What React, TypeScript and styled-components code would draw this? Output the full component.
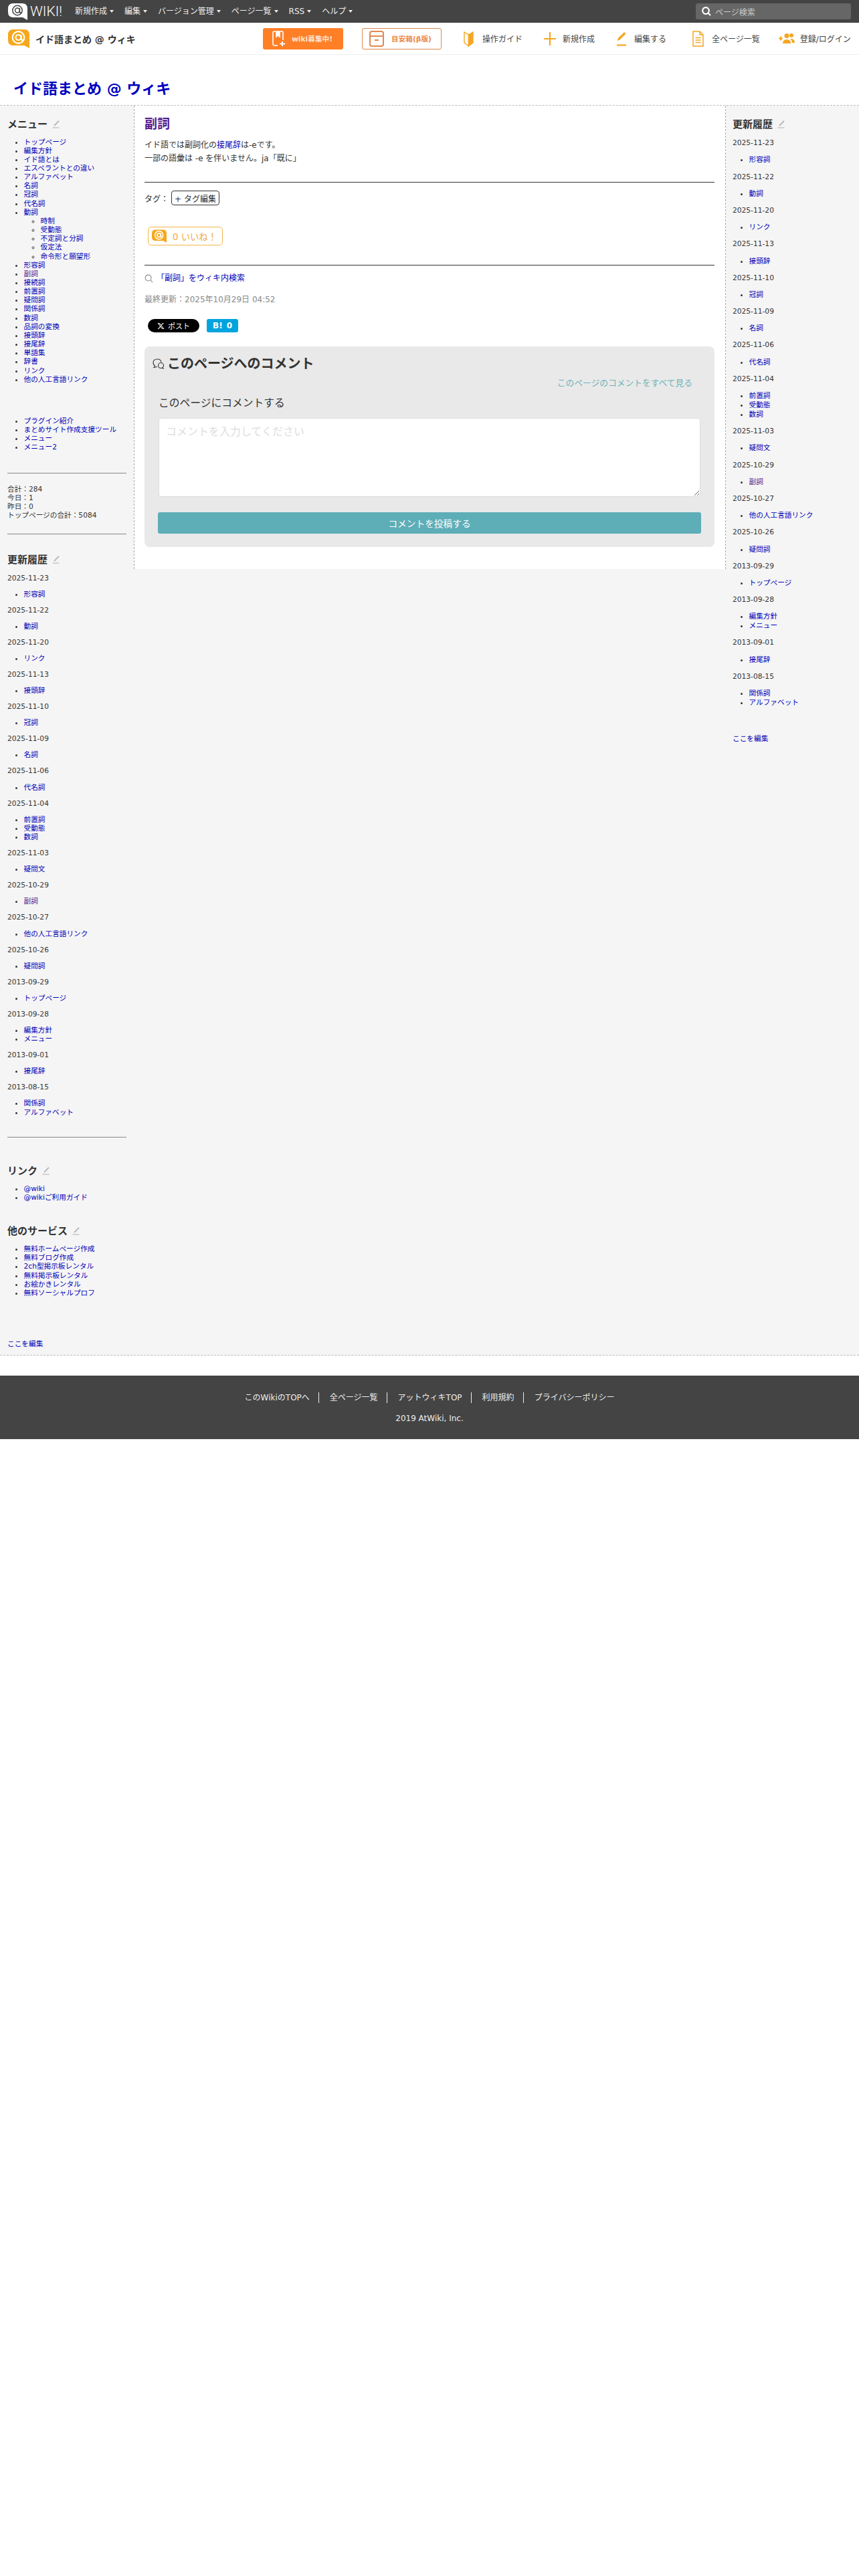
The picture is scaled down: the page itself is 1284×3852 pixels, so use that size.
import React from "react";
import styled, { createGlobalStyle } from "styled-components";

const Global = createGlobalStyle`
  html, body { margin: 0; padding: 0; background: #fff; }
  body { font-family: "DejaVu Sans", "Noto Sans CJK JP", sans-serif; color: #333; }
  * { box-sizing: border-box; }
  a { text-decoration: none; }
`;

const TopBar = styled.div`
  height: 34px; background: #444; display: flex; align-items: center; padding: 0 12px;
`;
const Logo = styled.div`display: flex; align-items: center; width: 100px; flex: none;`;
const LogoWord = styled.span`
  font-family: Roboto, "Liberation Sans", sans-serif; font-weight: 300; font-size: 21px; color: #fff; margin-left: 4px;
`;
const TopNav = styled.nav`display: flex; gap: 16px; flex: 1;`;
const TopItem = styled.a`
  font-size: 12px; color: #eee; display: flex; align-items: center; gap: 4px; line-height: 16px;
  &::after { content: ""; border-left: 3px solid transparent; border-right: 3px solid transparent; border-top: 4px solid #eee; }
`;
const Search = styled.div`
  width: 232px; height: 24px; background: #666; border-radius: 3px; display: flex; align-items: center;
  padding-left: 9px; gap: 6px; font-size: 12px; color: #ccc;
`;

const SubBar = styled.div`
  height: 48px; display: flex; align-items: center; border-bottom: 1px solid #eee;
`;
const Brand = styled.div`
  width: 393px; flex: none; padding-left: 12px; display: flex; align-items: center; gap: 9px;
  font-size: 14px; font-weight: bold; color: #333;
`;
const RecruitButton = styled.a`
  width: 120px; height: 32px; background: #ff7f27; border-radius: 3px; display: flex; align-items: center;
  padding-left: 14px; gap: 9px; font-size: 10.67px; font-weight: bold; color: #fde6d2;
`;
const BoxButton = styled.a`
  width: 119px; height: 32px; margin-left: 28px; border: 1px solid #d98a52; border-radius: 3px; display: flex; align-items: center;
  padding-left: 10px; gap: 11px; font-size: 10.67px; font-weight: bold; color: #ea8a4a; white-space: nowrap;
`;
const ToolItem = styled.a<{ $ml: number; $gap: number }>`
  margin-left: ${(p) => p.$ml}px; display: flex; align-items: center; gap: ${(p) => p.$gap}px; font-size: 12px; color: #444;
  white-space: nowrap;
`;

const TitleBand = styled.div`
  height: 76px; border-bottom: 1px dashed #bbb; padding: 38px 0 0 20px;
`;
const SiteTitle = styled.a`
  font-family: "DejaVu Sans", "Noto Sans CJK JP", sans-serif; font-size: 22px; line-height: 26px; font-weight: bold; color: #0000c0; display: block;
`;

const Columns = styled.div`
  display: grid; grid-template-columns: 200px 885px 199px; align-items: start; background: #f5f5f5;
  border-bottom: 1px dashed #bbb;
`;
const LeftColumn = styled.aside`padding: 18px 10px 10px 11px; font-size: 10.67px; line-height: 13.15px;`;
const RightColumn = styled.aside`padding: 18px 10px 0 10px; font-size: 10.67px; line-height: 14px; color: #333;`;
const Main = styled.main`
  background: #fff; border-left: 1px dashed #aaa; border-right: 1px dashed #aaa; padding: 15px 16px 33px 15px; font-size: 12px; color: #333;
`;

const SideHeading = styled.h3<{ $mt?: number }>`
  margin: ${(p) => p.$mt ?? 0}px 0 0 0; font-size: 15px; line-height: 20px; font-weight: bold; color: #333; display: flex; align-items: center; gap: 7px;
`;
const SideList = styled.ul<{ $mt?: number; $mb?: number }>`
  margin: ${(p) => p.$mt ?? 0}px 0 ${(p) => p.$mb ?? 0}px 0; padding: 0 0 0 24.5px; list-style: disc;
  & ul { margin: 0; padding: 0 0 0 25px; list-style: circle; }
`;
const SideLink = styled.a<{ $visited?: boolean }>`color: ${(p) => (p.$visited ? "#551a8b" : "#0000b8")};`;
const SideRule = styled.hr<{ $mt: number }>`
  margin: ${(p) => p.$mt}px 0 0 0; border: 0; border-top: 1px solid #888; width: 178px;
`;
const Counter = styled.div`margin-top: 17.5px; color: #333;`;
const DateLine = styled.p<{ $gap: number }>`margin: ${(p) => p.$gap}px 0; color: #333;`;
const EditLink = styled.a<{ $mt: number }>`display: block; margin-top: ${(p) => p.$mt}px; color: #0000b8;`;

const PageTitle = styled.h2`margin: 0; font-size: 19px; line-height: 24px; font-weight: bold; color: #551a8b;`;
const Para = styled.p`margin: 10px 0 0; line-height: 20px;`;
const MainRule = styled.hr<{ $mt: number }>`margin: ${(p) => p.$mt}px 0 0; border: 0; border-top: 1px solid #333;`;
const InlineLink = styled.a`color: #0000b8;`;
const TagRow = styled.div`margin-top: 12px; display: flex; align-items: center; gap: 4px; height: 22px;`;
const TagButton = styled.a`
  height: 22px; width: 72px; border: 1px solid #333; border-radius: 4px; display: flex; align-items: center; justify-content: center; color: #333; font-size: 12px; white-space: nowrap;
`;
const LikeButton = styled.a`
  margin: 32px 0 0 5px; width: 112px; height: 28px; border: 1px solid #f3b44a; border-radius: 5px; display: flex; align-items: center;
  padding-left: 5px; gap: 9px; color: #efaa44; font-size: 13.33px; white-space: nowrap;
`;
const SearchLine = styled.div`margin-top: 11px; height: 16px; display: flex; align-items: center; gap: 5px; line-height: 16px; white-space: nowrap;`;
const Updated = styled.div`margin-top: 16px; line-height: 16px; color: #888;`;
const ShareRow = styled.div`margin: 21px 0 0 5px; display: flex; gap: 11px;`;
const PostButton = styled.a`
  width: 77px; height: 20px; background: #000; color: #fff; border-radius: 10px; display: flex; align-items: center; padding-left: 14px; gap: 5px; font-size: 11px;
`;
const HatenaButton = styled.a`
  width: 47px; height: 20px; background: #00a4de; color: #fff; border-radius: 3px; display: flex; align-items: center; justify-content: center; gap: 6px; font-size: 12px; font-weight: bold;
`;
const CommentBox = styled.section`
  margin-top: 21px; background: #e9e9e9; border-radius: 8px; padding: 14px 20px 20px; height: 300px;
`;
const CommentTitle = styled.h3`
  margin: 0 0 0 -8px; display: flex; align-items: center; gap: 4px; font-size: 20px; line-height: 24px; font-weight: bold; color: #333;
`;
const ViewAll = styled.a`display: block; margin: 9px 13px 0 0; text-align: right; font-size: 12.75px; line-height: 16px; color: #6db3b8;`;
const CommentLabel = styled.div`margin: 12px 0 0 1px; font-size: 15.75px; line-height: 20px; color: #333;`;
const CommentInput = styled.textarea`
  display: block; margin: 12px 1px 0; width: 810px; height: 118px; border: 1px solid #ddd; border-radius: 4px; background: #fff; padding: 10px;
  font: 16px/20px "DejaVu Sans", "Noto Sans CJK JP", sans-serif;
  &::placeholder { color: #ddd; }
`;
const SubmitButton = styled.button`
  display: block; margin-top: 23px; width: 100%; height: 32px; border: 0; border-radius: 3px; background: #5eaeb8; color: #fff;
  font: 13.7px/32px "DejaVu Sans", "Noto Sans CJK JP", sans-serif;
`;

const Footer = styled.footer`
  margin-top: 30px; height: 95px; background: #444; color: #eee; font-size: 12px; padding-top: 25px;
`;
const FooterLinks = styled.div`display: flex; justify-content: center; height: 16px; line-height: 16px;`;
const FooterLink = styled.a<{ $first?: boolean; $last?: boolean }>`
  color: #eee; padding: 0 ${(p) => (p.$last ? 0 : 13)}px 0 ${(p) => (p.$first ? 0 : 16)}px;
  border-right: ${(p) => (p.$last ? "0" : "1px solid #eee")};
`;
const Copy = styled.div`margin-top: 15px; text-align: center; line-height: 16px;`;

const Pencil = () => (
  <svg width="11" height="12" viewBox="0 0 11 12" fill="none">
    <path d="M3 8 L10 0.8" stroke="#bbb" strokeWidth="2" />
    <path d="M0.5 11 H10.5" stroke="#bbb" strokeWidth="1.2" />
  </svg>
);

const WhiteBubble = () => (
  <svg width="29" height="25" viewBox="0 0 29 25">
    <path d="M8 0 H21 Q29 0 29 8 V25 L22 21 H8 Q0 21 0 13 V8 Q0 0 8 0 Z" fill="#fff" />
    <circle cx="14" cy="10.5" r="7.2" fill="none" stroke="#444" strokeWidth="1.5" />
    <circle cx="14" cy="10.5" r="3.4" fill="none" stroke="#444" strokeWidth="1.5" />
    <path d="M17.4 7 V12 Q17.4 14.800 20.500 14.800" fill="none" stroke="#444" strokeWidth="1.500" />
  </svg>
);

const GoldBubble = ({ w, h }: { w: number; h: number }) => (
  <svg width={w} height={h} viewBox="0 0 32 28">
    <path d="M8 0 H24 Q32 0 32 8 V28 L24 24 H8 Q0 24 0 16 V8 Q0 0 8 0 Z" fill="#f6a81c" />
    <circle cx="15.500" cy="12" r="8.800" fill="none" stroke="#fff" strokeWidth="2.200" />
    <circle cx="15.500" cy="12" r="4" fill="none" stroke="#fff" strokeWidth="2.200" />
    <path d="M19.500 8 V13 Q19.500 16.500 23 16.500" fill="none" stroke="#fff" strokeWidth="2.200" />
  </svg>
);

const Magnifier = ({ color, size, sw }: { color: string; size: number; sw: number }) => (
  <svg width={size} height={size} viewBox="0 0 14 14" fill="none">
    <circle cx="6" cy="6" r="4.800" stroke={color} strokeWidth={sw} />
    <path d="M9.500 9.500 L13 13" stroke={color} strokeWidth={sw} />
  </svg>
);

const BookPlusIcon = () => (
  <svg width="20" height="24" viewBox="0 0 20 24" fill="none" stroke="#fff" strokeWidth="1.600">
    <path d="M8 22 H3 Q1 22 1 20 V3 Q1 1 3 1 H15 Q16 1 16 3 V14" />
    <path d="M6 1 V9 L8.500 7 L11 9 V1" fill="#fff" />
    <path d="M15 16 V23 M11.500 19.500 H19" strokeWidth="2" />
  </svg>
);
const BoxIcon = () => (
  <svg width="22" height="24" viewBox="0 0 22 24" fill="none" stroke="#e08a50" strokeWidth="2">
    <rect x="1" y="1" width="20" height="22" rx="3" />
    <path d="M1 8 H21 M8 14 H14" />
  </svg>
);
const GuideIcon = () => (
  <svg width="15" height="24" viewBox="0 0 15 24" fill="none">
    <path d="M1 2 L7.500 6 V23 L1 18 Z" fill="#fff" stroke="#f5a623" strokeWidth="1.400" />
    <path d="M14 2 L7.500 6 V23 L14 18 Z" fill="#f5a623" stroke="#f5a623" strokeWidth="1.400" />
  </svg>
);
const PlusIcon = () => (
  <svg width="18" height="22" viewBox="0 0 18 22" fill="none" stroke="#f5a623" strokeWidth="2.200">
    <path d="M9 1 V21 M0 11 H18" />
  </svg>
);
const EditIcon = () => (
  <svg width="16" height="22" viewBox="0 0 16 22">
    <path d="M1.500 14 L3 10 L12 1 L14.500 3.500 L5.500 12.500 Z" fill="#f5a623" />
    <path d="M1 20.500 H15" stroke="#f5a623" strokeWidth="2.200" />
  </svg>
);
const DocIcon = () => (
  <svg width="17" height="24" viewBox="0 0 17 24" fill="none" stroke="#f5a623" strokeWidth="1.500">
    <path d="M1 1 H11 L16 6 V23 H1 Z" fill="#fff" />
    <path d="M11 1 V6 H16 M4.500 10.500 H12.500 M4.500 14 H12.500 M4.500 17.500 H12.500" />
  </svg>
);
const PeopleIcon = () => (
  <svg width="24" height="18" viewBox="0 0 24 18" fill="#f5a623">
    <path d="M0 7.500 H6 V9.500 H0 Z M2 5.500 H4 V11.500 H2 Z" />
    <circle cx="12" cy="4.500" r="3.500" />
    <circle cx="19" cy="4" r="3" />
    <path d="M6 16 Q6 10 12 10 Q18 10 18 16 Z" />
    <path d="M19 9 Q24 9.500 24 15 H20 Q20 11.500 17.500 9.500 Z" />
  </svg>
);
const ChatIcon = () => (
  <svg width="18" height="16" viewBox="0 0 18 16" fill="none" stroke="#333" strokeWidth="1.100">
    <path d="M4 11 Q1 9.500 1 6.500 Q1 1 7 1 Q12.500 1 13 5.500" />
    <path d="M4 11 L2 13.500 L7 12.500" />
    <circle cx="12.500" cy="10.500" r="4" fill="none" />
    <path d="M14 14 L17 15.500" />
  </svg>
);
const XLogo = () => (
  <svg width="11" height="11" viewBox="0 0 24 24" fill="#fff">
    <path d="M18.200 2h3.400l-7.400 8.500L23 22h-6.800l-5.300-7-6.100 7H1.400l7.900-9.100L1 2h7l4.800 6.400L18.200 2zm-1.200 18h1.900L7 3.900H5L17 20z" />
  </svg>
);

const menu = ["トップページ", "編集方針", "イド語とは", "エスペラントとの違い", "アルファベット", "名詞", "冠詞", "代名詞", "動詞"];
const subMenu = ["時制", "受動態", "不定詞と分詞", "仮定法", "命令形と願望形"];
const menuTail = ["形容詞", "副詞", "接続詞", "前置詞", "疑問詞", "関係詞", "数詞", "品詞の変換", "接頭辞", "接尾辞", "単語集", "辞書", "リンク", "他の人工言語リンク"];
const tools = ["プラグイン紹介", "まとめサイト作成支援ツール", "メニュー", "メニュー2"];
const history: [string, string[]][] = [
  ["2025-11-23", ["形容詞"]],
  ["2025-11-22", ["動詞"]],
  ["2025-11-20", ["リンク"]],
  ["2025-11-13", ["接頭辞"]],
  ["2025-11-10", ["冠詞"]],
  ["2025-11-09", ["名詞"]],
  ["2025-11-06", ["代名詞"]],
  ["2025-11-04", ["前置詞", "受動態", "数詞"]],
  ["2025-11-03", ["疑問文"]],
  ["2025-10-29", ["副詞"]],
  ["2025-10-27", ["他の人工言語リンク"]],
  ["2025-10-26", ["疑問詞"]],
  ["2013-09-29", ["トップページ"]],
  ["2013-09-28", ["編集方針", "メニュー"]],
  ["2013-09-01", ["接尾辞"]],
  ["2013-08-15", ["関係詞", "アルファベット"]],
];

const History = ({ gap }: { gap: number }) => (
  <>
    {history.map(([date, items]) => (
      <React.Fragment key={date}>
        <DateLine $gap={gap}>{date}</DateLine>
        <SideList>
          {items.map((i) => (
            <li key={i}><SideLink $visited={i === "副詞"}>{i}</SideLink></li>
          ))}
        </SideList>
      </React.Fragment>
    ))}
  </>
);

export default function App() {
  return (
    <>
      <Global />
      <TopBar>
        <Logo><WhiteBubble /><LogoWord>WIKI!</LogoWord></Logo>
        <TopNav>
          {["新規作成", "編集", "バージョン管理", "ページ一覧", "RSS", "ヘルプ"].map((t) => <TopItem key={t}>{t}</TopItem>)}
        </TopNav>
        <Search><Magnifier color="#fff" size={14} sw={2.2} />ページ検索</Search>
      </TopBar>
      <SubBar>
        <Brand><GoldBubble w={32} h={28} />イド語まとめ @ ウィキ</Brand>
        <RecruitButton><BookPlusIcon />wiki募集中!</RecruitButton>
        <BoxButton><BoxIcon />目安箱(β版)</BoxButton>
        <ToolItem $ml={33} $gap={13}><GuideIcon />操作ガイド</ToolItem>
        <ToolItem $ml={32} $gap={10}><PlusIcon />新規作成</ToolItem>
        <ToolItem $ml={32} $gap={11}><EditIcon />編集する</ToolItem>
        <ToolItem $ml={39} $gap={12}><DocIcon />全ページ一覧</ToolItem>
        <ToolItem $ml={28} $gap={8}><PeopleIcon />登録/ログイン</ToolItem>
      </SubBar>
      <TitleBand><SiteTitle>イド語まとめ @ ウィキ</SiteTitle></TitleBand>
      <Columns>
        <LeftColumn>
          <SideHeading>メニュー <Pencil /></SideHeading>
          <SideList $mt={9.5}>
            {menu.map((m) => <li key={m}><SideLink>{m}</SideLink></li>)}
            <ul>{subMenu.map((m) => <li key={m}><SideLink>{m}</SideLink></li>)}</ul>
            {menuTail.map((m) => <li key={m}><SideLink $visited={m === "副詞"}>{m}</SideLink></li>)}
          </SideList>
          <SideList $mt={49}>
            {tools.map((m) => <li key={m}><SideLink>{m}</SideLink></li>)}
          </SideList>
          <SideRule $mt={31} />
          <Counter>合計：284<br />今日：1<br />昨日：0<br />トップページの合計：5084</Counter>
          <SideRule $mt={20} />
          <SideHeading $mt={28}>更新履歴 <Pencil /></SideHeading>
          <History gap={10.93} />
          <SideRule $mt={30} />
          <SideHeading $mt={40}>リンク <Pencil /></SideHeading>
          <SideList $mt={10.5}>
            <li><SideLink>@wiki</SideLink></li>
            <li><SideLink>@wikiご利用ガイド</SideLink></li>
          </SideList>
          <SideHeading $mt={33}>他のサービス <Pencil /></SideHeading>
          <SideList $mt={10.5}>
            {["無料ホームページ作成", "無料ブログ作成", "2ch型掲示板レンタル", "無料掲示板レンタル", "お絵かきレンタル", "無料ソーシャルプロフ"].map((m) => <li key={m}><SideLink>{m}</SideLink></li>)}
          </SideList>
          <EditLink $mt={63}>ここを編集</EditLink>
        </LeftColumn>
        <Main>
          <PageTitle>副詞</PageTitle>
          <Para>イド語では副詞化の<InlineLink>接尾辞</InlineLink>は-eです。<br />一部の語彙は -e を伴いません。ja「既に」</Para>
          <MainRule $mt={25} />
          <TagRow>タグ： <TagButton>+ タグ編集</TagButton></TagRow>
          <LikeButton><GoldBubble w={22} h={20} />0 いいね！</LikeButton>
          <MainRule $mt={29} />
          <SearchLine><Magnifier color="#888" size={13} sw={1.2} /><InlineLink>「副詞」をウィキ内検索</InlineLink></SearchLine>
          <Updated>最終更新：2025年10月29日 04:52</Updated>
          <ShareRow>
            <PostButton><XLogo />ポスト</PostButton>
            <HatenaButton><span>B!</span><span>0</span></HatenaButton>
          </ShareRow>
          <CommentBox>
            <CommentTitle><ChatIcon />このページへのコメント</CommentTitle>
            <ViewAll>このページのコメントをすべて見る</ViewAll>
            <CommentLabel>このページにコメントする</CommentLabel>
            <CommentInput placeholder="コメントを入力してください" />
            <SubmitButton>コメントを投稿する</SubmitButton>
          </CommentBox>
        </Main>
        <RightColumn>
          <SideHeading>更新履歴 <Pencil /></SideHeading>
          <History gap={11.2} />
          <EditLink $mt={40}>ここを編集</EditLink>
        </RightColumn>
      </Columns>
      <Footer>
        <FooterLinks>
          <FooterLink $first>このWikiのTOPへ</FooterLink>
          <FooterLink>全ページ一覧</FooterLink>
          <FooterLink>アットウィキTOP</FooterLink>
          <FooterLink>利用規約</FooterLink>
          <FooterLink $last>プライバシーポリシー</FooterLink>
        </FooterLinks>
        <Copy>2019 AtWiki, Inc.</Copy>
      </Footer>
    </>
  );
}
